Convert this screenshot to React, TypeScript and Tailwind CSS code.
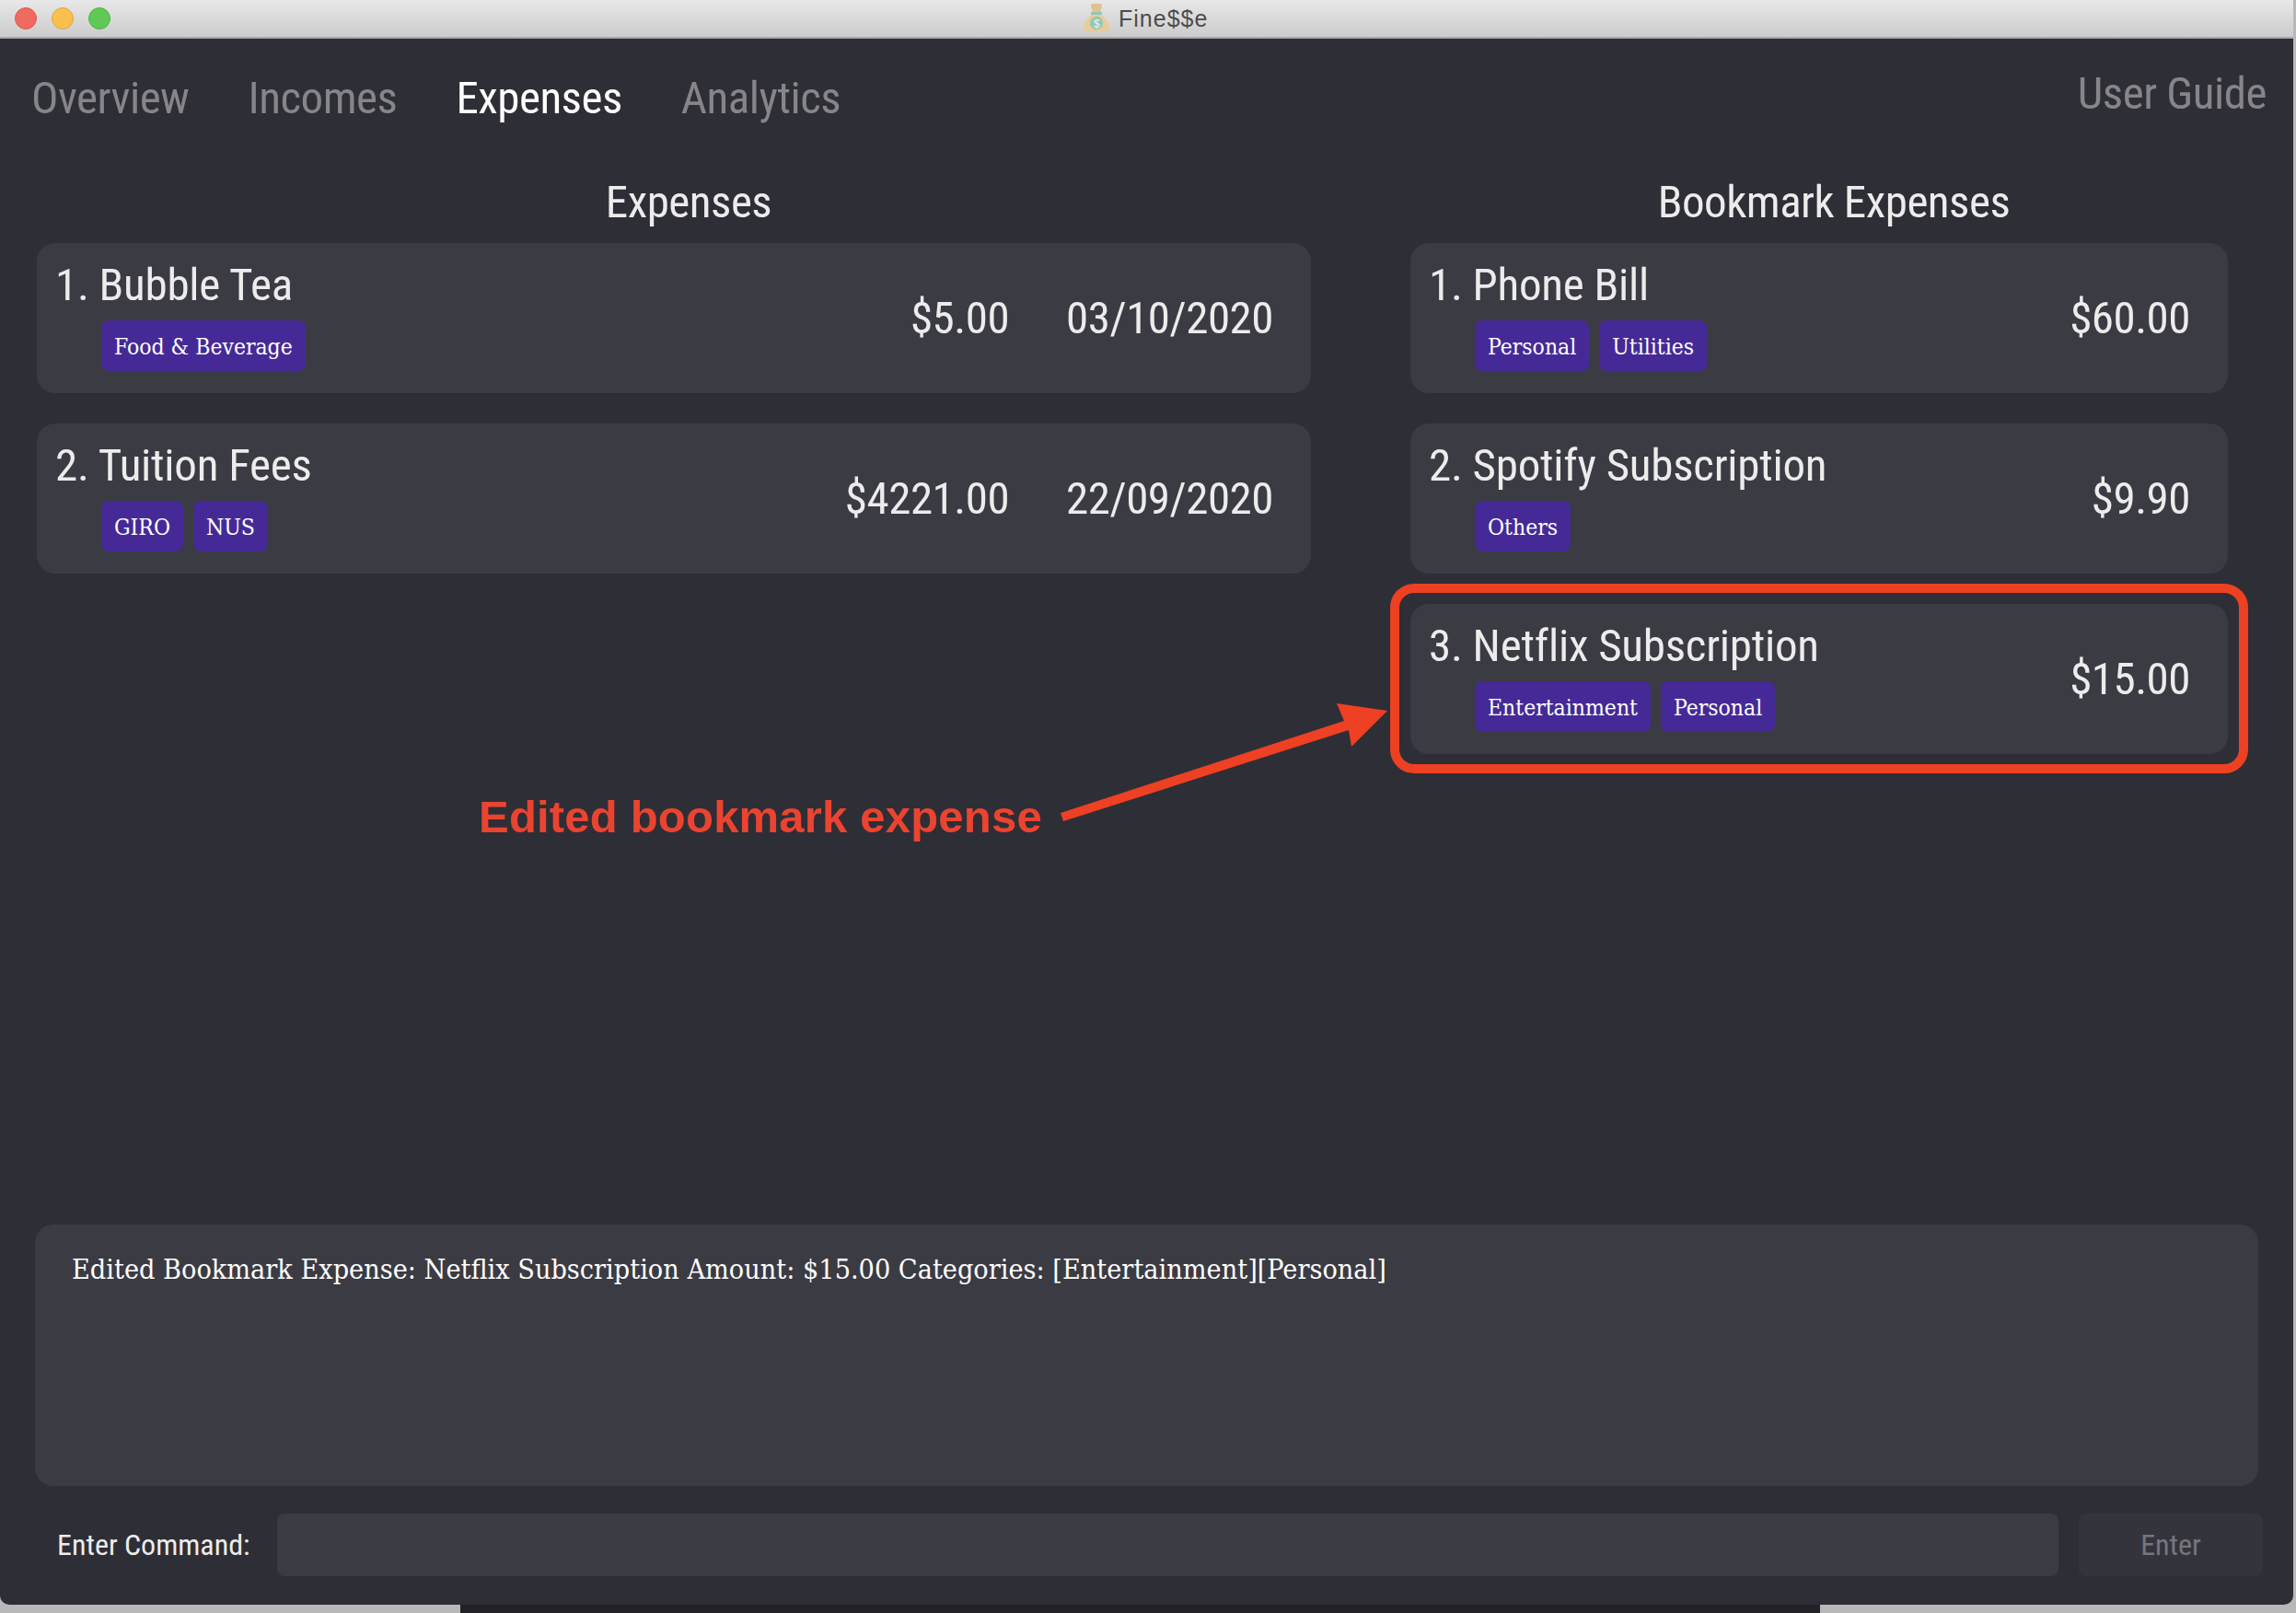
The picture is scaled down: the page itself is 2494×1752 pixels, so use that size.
type Item = { name: string; amount: string; date?: string; tags: string[] };

const expenses: Item[] = [
  { name: '1. Bubble Tea', amount: '$5.00', date: '03/10/2020', tags: ['Food & Beverage'] },
  { name: '2. Tuition Fees', amount: '$4221.00', date: '22/09/2020', tags: ['GIRO', 'NUS'] },
];

const bookmarks: Item[] = [
  { name: '1. Phone Bill', amount: '$60.00', tags: ['Personal', 'Utilities'] },
  { name: '2. Spotify Subscription', amount: '$9.90', tags: ['Others'] },
  { name: '3. Netflix Subscription', amount: '$15.00', tags: ['Entertainment', 'Personal'] },
];

const condensed = "font-['Roboto',sans-serif] font-[450] [font-stretch:75%] tracking-[-0.5px]";
const slab = "font-['DejaVu_Serif_Condensed','DejaVu_Serif',serif] font-normal [font-stretch:condensed] tracking-normal";

function Card({ item }: { item: Item }) {
  return (
    <div className="flex h-[163px] items-center justify-between rounded-[20px] bg-[#3b3b43] pl-[20px] pr-[41px]">
      <div className="flex h-full flex-col pt-[17px]">
        <div className="text-[49px] leading-[58px] tracking-[-0.25px] text-[#ececec]">{item.name}</div>
        <div className="mt-[9px] flex gap-[11px] pl-[50px]">
          {item.tags.map((tag) => (
            <span
              key={tag}
              className={`flex h-[55px] items-center rounded-[8px] bg-[#452a97] px-[14px] pt-[3px] text-[24.5px] text-white ${slab}`}
            >
              {tag}
            </span>
          ))}
        </div>
      </div>
      <div className="flex items-center gap-[62px] text-[49px] text-[#ececec]">
        <span>{item.amount}</span>
        {item.date ? <span>{item.date}</span> : null}
      </div>
    </div>
  );
}

function Column({ title, items, className }: { title: string; items: Item[]; className: string }) {
  return (
    <div className={className}>
      <div className="h-[73px] pl-[32px] text-center text-[49px] leading-[58px] text-[#ececec]">{title}</div>
      <div className="flex flex-col gap-[33px]">
        {items.map((item) => (
          <Card key={item.name} item={item} />
        ))}
      </div>
    </div>
  );
}

function MoneyBag() {
  return (
    <svg width="28" height="32" viewBox="0 0 28 32">
      <path d="M8 1.5C8 .5 9 0 10 0h8c1 0 2 .5 2 1.5 0 3-1.5 5-2 8h-8c-.5-3-2-5-2-8z" fill="#e0c191" />
      <path d="M9 12h10c5 3 9 9 9 13.500 0 4-2.500 5.500-6 5.500H6c-3.500 0-6-1.500-6-5.500C0 21 4 15 9 12z" fill="#e8cc9d" />
      <rect x="8" y="9" width="12" height="3" fill="#8ec9b4" />
      <circle cx="14" cy="21" r="7" fill="#8ec9b4" />
      <text x="14" y="25.500" textAnchor="middle" fontSize="12" fill="#f3f3f3" fontFamily="Liberation Sans">$</text>
    </svg>
  );
}

export default function App() {
  return (
    <div className="relative h-[1752px] w-[2494px] overflow-hidden bg-[#b8b8b8]">
      <div className="absolute bottom-0 left-[500px] h-[9px] w-[1477px] bg-[#222226]" />

      <div className={`relative flex h-[1743px] w-[2491px] flex-col overflow-hidden rounded-b-[10px] bg-[#2e2e36] ${condensed}`}>
        <div className="relative flex h-[42px] shrink-0 items-center border-b-2 border-[#a9a9a9] bg-gradient-to-b from-[#e8e8e8] to-[#cccccc] pl-[16px]">
          <div className="flex gap-[16px]">
            <span className="h-[24px] w-[24px] rounded-full border border-[#e0564d] bg-[#ef6b60]" />
            <span className="h-[24px] w-[24px] rounded-full border border-[#e0a63f] bg-[#f9c04f]" />
            <span className="h-[24px] w-[24px] rounded-full border border-[#4fb045] bg-[#60c956]" />
          </div>
          <div className="ml-[1057px] flex items-center gap-[10px]">
            <MoneyBag />
            <span className="font-['Liberation_Sans',sans-serif] text-[25px] font-normal leading-none tracking-[1px] [font-stretch:normal] text-[#4c4c4c]">Fine$$e</span>
          </div>
        </div>

        <div className="flex h-[149px] shrink-0 items-start justify-between pl-[34px] pr-[29px] text-[49px] leading-[58px]">
          <div className="flex gap-[64px] pt-[36px] text-[#85858a]">
            <span>Overview</span>
            <span>Incomes</span>
            <span className="text-white">Expenses</span>
            <span>Analytics</span>
          </div>
          <span className="pt-[31px] text-[#85858a]">User Guide</span>
        </div>

        <div className="flex flex-1 gap-[108px] pl-[40px]">
          <Column title="Expenses" items={expenses} className="w-[1384px]" />
          <Column title="Bookmark Expenses" items={bookmarks} className="w-[888px]" />
        </div>

        <div className={`mx-[38px] h-[284px] w-[2415px] shrink-0 rounded-[20px] bg-[#3b3b43] pl-[40px] pt-[28px] text-[30.25px] leading-[42px] text-white ${slab}`}>
          Edited Bookmark Expense: Netflix Subscription Amount: $15.00 Categories: [Entertainment][Personal]
        </div>

        <div className="flex h-[129px] shrink-0 items-start pl-[62px] pt-[30px]">
          <span className="flex h-[68px] w-[239px] items-center text-[32px] tracking-normal text-[#ececec]">Enter Command:</span>
          <div className="h-[68px] w-[1935px] rounded-[8px] bg-[#3b3b43]" />
          <div className="ml-[22px] flex h-[68px] w-[200px] items-center justify-center rounded-[8px] bg-[#34343c] text-[32px] tracking-normal text-[#77777c]">
            Enter
          </div>
        </div>
      </div>

      {/* annotation drawn over the screenshot */}
      <div className="absolute left-[1510px] top-[634px] h-[206px] w-[932px] rounded-[26px] border-[10px] border-[#ee4023]" />
      <svg className="absolute left-0 top-0" width="2494" height="1752">
        <polygon points="1152,883 1460,783 1452,764 1507,772 1468,811 1465,793 1155,892" fill="#ee4023" />
      </svg>
      <div className="absolute left-[520px] top-[857px] font-['Liberation_Sans',sans-serif] text-[49px] font-bold leading-[60px] tracking-[0.2px] text-[#ea4430]">
        Edited bookmark expense
      </div>
    </div>
  );
}
